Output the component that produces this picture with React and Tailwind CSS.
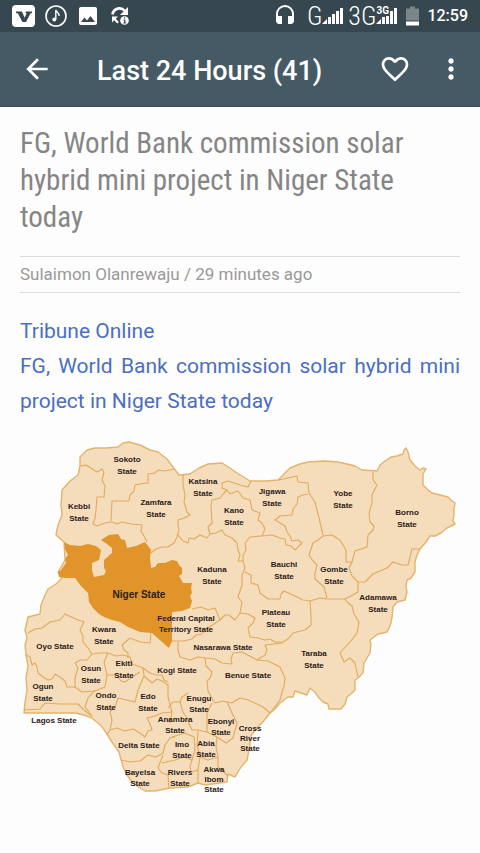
import {
    MdArrowBack,
    MdFavoriteBorder,
    MdHeadset,
    MdImage,
    MdMoreVert
} from "react-icons/md";

const OUTLINE =
    "80,457 87,450 95,448 106,448 118,447 123,443 129,442 140,445 150,450 158,452 167,459 173,467 179,475 190,474 199,468 208,464 222,463 230,468 237,473 250,481 265,481 278,480 284,474 290,468 300,464 308,462 325,461 338,462 347,464 355,466 362,470 377,471 380,465 385,461 391,457 397,456 403,454 404,450 406,448 408,452 410,460 415,466 420,470 423,468 426,469 423,474 423,485 427,489 432,493 436,494 448,497 451,500 455,503 454,509 454,515 453,521 455,524 447,528 441,533 435,536 430,536 426,542 420,549 417,555 415,562 415,572 411,578 407,580 406,586 407,592 405,600 397,602 393,607 392,618 390,626 387,632 378,634 370,640 371,645 370,653 367,658 364,663 363,673 358,678 355,680 355,690 351,694 347,697 345,704 341,709 329,709 328,704 323,702 319,698 315,692 310,688 307,695 295,691 293,697 288,697 280,703 275,709 270,713 262,723 256,729 250,737 250,745 247,760 241,767 235,777 228,774 227,782 205,785 198,783 188,787 170,788 155,791 145,791 137,786 132,782 127,775 123,767 119,752 112,742 103,728 98,723 92,718 84,715 75,713 45,713 24,713 25,702 27,690 26,678 28,666 26,655 25,645 27,638 25,630 28,617 40,614 41,605 45,595 48,589 56,584 62,578 58,572 61,567 65,560 64,542 56,535 58,525 62,515 61,505 62,490 70,481 78,475 80,466";

const NIGER =
    "64,542 70,545 80,546 88,544 96,546 101,550 99,560 92,563 92,570 94,577 104,575 106,571 104,568 104,560 112,553 112,548 107,544 101,540 109,535 118,534 121,539 125,540 127,548 136,546 145,542 148,546 151,550 150,558 151,568 155,567 158,563 165,563 172,560 177,561 179,565 182,568 182,574 179,576 183,583 192,583 191,588 192,593 190,596 192,601 190,608 182,611 172,612 172,641 169,648 161,641 152,633 140,632 128,627 120,622 112,620 104,617 99,614 93,608 89,602 88,593 81,586 75,578 66,578 59,577 58,572 61,570 66,563 65,559 68,555 65,549";

const BORDERS = [
    "80,466 86,465 97,472 102,469 104,472 102,480 105,486 104,497 97,497 96,510 95,518 93,524 97,526 105,523 112,522 117,524 122,522 131,524 142,525 141,531 144,536 147,542",
    "174,469 165,471 158,470 155,473 148,474 148,483 140,484 135,485 134,491 130,495 129,501 112,501 111,521",
    "183,475 183,485 185,495 184,502 187,512 190,515 184,518 178,520 178,525 179,530 177,537 174,543 168,547 162,547 156,549 151,553",
    "178,535 183,541 188,543 189,538 194,539 200,535 207,538 210,534 216,533 222,530 225,535 232,538 237,543 238,550 240,555 238,561 243,561",
    "210,534 208,527 212,523 211,505 212,500 220,498 224,493 227,490 222,488 222,483 228,481 240,485 248,487 251,481",
    "227,490 230,494 238,491 243,498 250,500 252,510 260,513 258,520 262,523 265,529 262,536",
    "262,536 250,537 245,543 246,550 243,555 243,561 245,568 242,575 242,585 238,597 242,602 240,613",
    "262,536 272,535 280,538 285,539 286,545 291,546 295,550 302,543 298,540 292,541 290,536 287,532 285,526 275,520 280,516 292,515 293,509 297,504 298,497 303,495 308,494",
    "278,480 288,478 297,476 298,482 308,483 309,493 315,502 319,518 323,535",
    "323,536 318,540 313,543 309,555 313,561 317,565 315,573 315,579 324,587 327,598",
    "323,536 332,535 340,540 346,550 346,562 352,562",
    "373,472 373,480 377,485 372,495 372,503 369,513 370,522 374,526 373,530 368,535 367,547 355,551 352,562 349,568 352,576 358,582",
    "420,549 412,549 410,557 408,565 402,565 393,562 387,568 373,574 365,582 358,582",
    "358,582 358,592 351,596 345,599 327,599 320,598 310,601",
    "345,599 348,603 352,606 354,614 359,622 357,633 350,642 340,653 344,662 350,658 355,663 358,677",
    "245,572 251,575 251,583 258,585 260,593 268,599 280,599 281,594 284,591 295,596 303,600 310,601",
    "310,601 311,615 311,625 305,630 293,633 288,639 283,642 275,642 270,639 265,640 258,638 250,637 248,628 253,623 255,618 248,614 240,613",
    "240,613 235,620 229,615 225,615 220,620 215,608 208,610 201,607 192,609",
    "172,641 184,641 192,639 196,635 202,634 205,630 220,620",
    "178,642 178,650 180,657 190,660 198,657 205,658 215,659 222,663 232,664 231,659 233,653 242,652 257,660 265,655 267,650 265,645 283,643",
    "257,660 268,661 280,667 285,678 284,686 282,692 280,700 270,713",
    "205,658 206,666 212,672 210,678 207,681 208,691 213,700 215,703 223,701 232,703 240,698 248,700 255,703 263,707 270,713",
    "28,633 35,629 42,628 50,622 60,620 65,614 78,620 84,622 80,630 83,636 83,642 88,648 92,654",
    "151,633 150,643 140,642 130,638 122,645 124,650 128,653 128,658",
    "92,654 100,653 108,653 116,656 123,655 130,657 132,664 143,668 150,673 156,675 162,675 164,680 168,682",
    "92,654 87,660 80,660 75,663 78,668 75,678 75,687 67,687 65,681 60,677 55,674 52,679 48,680 43,677 38,673 37,667 35,663 32,665 30,657 26,655",
    "75,687 82,692 95,691 105,687 107,675 104,662 108,653",
    "107,675 117,675 121,681 125,682 132,677 140,672",
    "143,668 144,676 138,690 135,702 118,698 115,707 110,712 112,720 110,730 107,735",
    "95,690 88,698 85,707 92,716",
    "24,710 40,709 45,703 60,704 78,704 84,710 92,716",
    "110,730 117,728 125,731 133,729 140,733 145,737 148,731 152,730 150,724 147,718 155,716 162,713 172,712",
    "144,676 152,683 157,679 162,681 168,685 168,697 172,712 170,723",
    "121,760 130,762 140,761 148,755 156,757 163,753 165,745 170,738 175,737",
    "163,755 158,768 162,773 168,775 169,788",
    "168,708 173,702 180,702 183,712 187,718 189,724 192,730 198,730 207,732 207,713 212,703",
    "188,693 182,697 180,702",
    "227,702 232,713 237,723 233,738 226,743 217,737 207,732",
    "217,737 216,747 218,757 218,767 225,773 228,776",
    "172,737 185,733 194,737 195,750 192,760 184,757 175,760 162,763",
    "198,731 197,745 200,757 198,770 198,783",
    "192,760 190,766 191,772 198,770",
    "200,757 208,760 218,757"
];

// [x, baseline, lines, line step]
const LABELS = [
    [127, 462, ["Sokoto", "State"], 12],
    [79, 509, ["Kebbi", "State"], 12],
    [156, 505, ["Zamfara", "State"], 12],
    [203, 484, ["Katsina", "State"], 12],
    [234, 513, ["Kano", "State"], 12],
    [272, 494, ["Jigawa", "State"], 12],
    [343, 496, ["Yobe", "State"], 12],
    [407, 515, ["Borno", "State"], 12],
    [212, 572, ["Kaduna", "State"], 12],
    [284, 567, ["Bauchi", "State"], 12],
    [334, 572, ["Gombe", "State"], 12],
    [378, 600, ["Adamawa", "State"], 12],
    [276, 615, ["Plateau", "State"], 12],
    [314, 656, ["Taraba", "State"], 12],
    [186, 621, ["Federal Capital", "Territory State"], 11],
    [223, 650, ["Nasarawa State"], 12],
    [104, 632, ["Kwara", "State"], 12],
    [55, 649, ["Oyo State"], 12],
    [91, 671, ["Osun", "State"], 12],
    [124, 666, ["Ekiti", "State"], 12],
    [177, 673, ["Kogi State"], 12],
    [248, 678, ["Benue State"], 12],
    [43, 689, ["Ogun", "State"], 12],
    [106, 698, ["Ondo", "State"], 12],
    [148, 699, ["Edo", "State"], 12],
    [199, 701, ["Enugu", "State"], 11],
    [54, 723, ["Lagos State"], 12],
    [175, 722, ["Anambra", "State"], 11],
    [221, 724, ["Ebonyi", "State"], 11],
    [250, 731, ["Cross", "River", "State"], 10],
    [139, 748, ["Delta State"], 12],
    [182, 747, ["Imo", "State"], 11],
    [206, 746, ["Abia", "State"], 11],
    [140, 775, ["Bayelsa", "State"], 11],
    [180, 775, ["Rivers", "State"], 11],
    [214, 772, ["Akwa", "Ibom", "State"], 10]
];

function SignalBars() {
    return (
        <svg viewBox="0 0 22 16" className="h-4 w-[22px]" fill="currentColor" aria-hidden="true">
            <path d="M0 16 L5 11 V16 Z" />
            <rect x="6" y="9" width="3" height="7" />
            <rect x="10" y="6" width="3" height="10" />
            <rect x="14" y="3" width="3" height="13" />
            <rect x="18" y="0" width="3" height="16" />
        </svg>
    );
}

function StatusBar() {
    return (
        <div className="flex h-8 items-center justify-between bg-[#37474f] px-3 text-white">

            {/* NOTIFICATIONS */}
            <div className="flex items-center gap-2">
                <svg viewBox="0 0 24 24" className="size-6" aria-hidden="true">
                    <rect x="0" y="1" width="23" height="22" rx="4" fill="#fff" />
                    <path d="M4 7.500h6l2.600 6.200 2-4.200-1-.6V7.500H20v1.400l-1.600.6-4.400 8.500h-3.600L6 9.500 4 8.900z" fill="#37474f" />
                </svg>
                <svg viewBox="0 0 24 24" className="size-6" fill="none" stroke="currentColor" aria-hidden="true">
                    <circle cx="12" cy="12" r="10" strokeWidth="1.600" />
                    <circle cx="10.300" cy="15.500" r="1.900" fill="currentColor" stroke="none" />
                    <path d="M11.800 15.500V6c.5 2.200 3.600 2.600 3.200 6" strokeWidth="1.400" />
                </svg>
                <MdImage className="size-6" />
                <svg viewBox="0 0 24 24" className="size-6" aria-hidden="true">
                    <path d="M4.500 10.500C5.500 4 13 2.500 17 7" fill="none" stroke="currentColor" strokeWidth="2.600" />
                    <path d="M20 3v8h-8z" fill="currentColor" />
                    <path d="M4 12.500h6l-2.200 2.200 3 3.200-1.500 1.500-3.100-3.100L4 18.500z" fill="currentColor" />
                    <circle cx="16.500" cy="16.500" r="4.300" fill="currentColor" />
                    <path d="M16.700 13.300v1.300M15.500 16h1.300v3M15.300 19h2.900" fill="none" stroke="#37474f" strokeWidth="1.200" />
                </svg>
            </div>

            {/* NETWORK, BATTERY, CLOCK */}
            <div className="flex items-center">
                <MdHeadset className="mr-2.5 size-6" />
                <span className="font-['Roboto_Condensed',Roboto,sans-serif] text-[26px] leading-8 font-light">G</span>
                <SignalBars />
                <span className="ml-1 font-['Roboto_Condensed',Roboto,sans-serif] text-[26px] leading-8 font-light">3G</span>
                <span className="relative">
                    <SignalBars />
                    <span className="absolute -top-0.5 left-0 bg-[#37474f] text-[10px] leading-[10px] font-bold">3G</span>
                </span>
                <svg viewBox="0 0 13 19" className="ml-2 h-5 w-[13px]" aria-hidden="true">
                    <path d="M4 0h5v2h4v12H0V2h4z" fill="#7b868b" />
                    <path d="M0 15h13v4H0z" fill="#fff" />
                </svg>
                <time className="ml-2 text-base font-medium">12:59</time>
            </div>
        </div>
    );
}

function AppBar() {
    return (
        <header className="flex h-[75px] items-center border-b border-[#3a4c55] bg-[#455a64] px-[21px] text-white">
            <button type="button" aria-label="Back">
                <MdArrowBack className="size-8" />
            </button>
            <h1 className="ml-11 flex-1 pt-1 text-[27px] font-medium">Last 24 Hours (41)</h1>
            <button type="button" aria-label="Favourite">
                <MdFavoriteBorder className="size-8" />
            </button>
            <button type="button" aria-label="More options" className="-mr-2 ml-6">
                <MdMoreVert className="size-8" />
            </button>
        </header>
    );
}

function NigeriaMap() {
    return (
        <svg viewBox="20 436 440 362" className="mt-[17px] w-full" role="img" aria-label="Map of Nigeria">
            <polygon points={OUTLINE} fill="#f5dcbb" stroke="#e3b46c" strokeWidth="1.400" strokeLinejoin="round" />
            <g fill="none" stroke="#e2aa5c" strokeWidth="1.100" strokeLinejoin="round">
                {BORDERS.map((points) => (
                    <polyline key={points} points={points} />
                ))}
            </g>
            <polygon points={NIGER} fill="#e09429" />
            <g fill="#2b2019" textAnchor="middle" className="font-['Liberation_Sans',Arial,sans-serif] text-[8px] font-bold">
                {LABELS.map(([x, y, lines, step]) => (
                    <text key={lines[0]} x={x} y={y}>
                        {lines.map((line, i) => (
                            <tspan key={line} x={x} y={y + i * step}>{line}</tspan>
                        ))}
                    </text>
                ))}
                <text x="139" y="598" className="text-[10px]">Niger State</text>
            </g>
        </svg>
    );
}

export default function App() {
    return (
        <div className="min-h-screen bg-[#fdfdfe] font-[Roboto,sans-serif]">
            <StatusBar />
            <AppBar />

            <article className="px-5 pt-[18px]">
                <h2 className="font-['Roboto_Condensed',Roboto,sans-serif] text-[29px] leading-[37px] text-[#858585]">
                    FG, World Bank commission solar hybrid mini project in Niger State today
                </h2>

                <p className="mt-5 border-y border-[#dcdcdc] text-[17px] leading-[35px] text-[#999]">
                    Sulaimon Olanrewaju / 29 minutes ago
                </p>

                <div className="mt-[21px] text-justify text-[21px] leading-[35px] text-[#4a6fc0]">
                    <a href="#source" className="block">Tribune Online</a>
                    <a href="#article" className="block">
                        FG, World Bank commission solar hybrid mini project in Niger State today
                    </a>
                </div>

                <NigeriaMap />
            </article>
        </div>
    );
}
